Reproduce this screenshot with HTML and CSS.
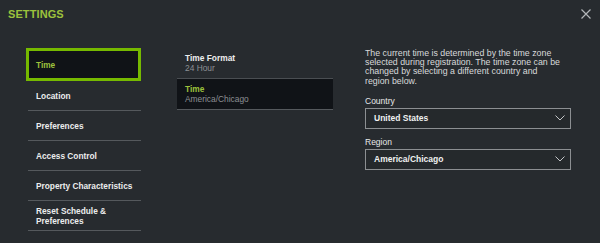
FILE: index.html
```html
<!DOCTYPE html>
<html lang="en">
<head>
    <meta charset="UTF-8">
    <meta name="viewport" content="width=device-width, initial-scale=1.0">
    <title>SETTINGS</title>
    <link rel="stylesheet" href="styles.css">
</head>
<body>
    <div class="settings">
        <div class="settings_header">
            <h1 class="settings_title">SETTINGS</h1>
            <button class="settings_close" aria-label="Close">
                <svg width="10" height="10" viewBox="0 0 10 10"><path d="M0.5 0.5 L9.5 9.5 M9.5 0.5 L0.5 9.5" stroke="#b3b6b9" stroke-width="1.2" fill="none"/></svg>
            </button>
        </div>

        <div class="settings_body">
            <!-- left menu -->
            <ul class="settings_nav">
                <li class="nav_item nav_item--active">Time</li>
                <li class="nav_item">Location</li>
                <li class="nav_item">Preferences</li>
                <li class="nav_item">Access Control</li>
                <li class="nav_item">Property Characteristics</li>
                <li class="nav_item">Reset Schedule &amp;<br>Preferences</li>
            </ul>

            <!-- middle list -->
            <ul class="settings_list">
                <li class="list_item">
                    <span class="list_name">Time Format</span>
                    <span class="list_value">24 Hour</span>
                </li>
                <li class="list_item list_item--active">
                    <span class="list_name">Time</span>
                    <span class="list_value">America/Chicago</span>
                </li>
            </ul>

            <!-- detail panel -->
            <div class="settings_detail">
                <p class="detail_text">The current time is determined by the time zone selected during registration. The time zone can be changed by selecting a different country and region below.</p>

                <label class="detail_label">Country</label>
                <div class="detail_select">
                    <span>United States</span>
                    <svg width="10" height="6" viewBox="0 0 10 6"><path d="M0.5 0.5 L5 5 L9.5 0.5" stroke="#c4c6c8" stroke-width="1" fill="none"/></svg>
                </div>

                <label class="detail_label">Region</label>
                <div class="detail_select">
                    <span>America/Chicago</span>
                    <svg width="10" height="6" viewBox="0 0 10 6"><path d="M0.5 0.5 L5 5 L9.5 0.5" stroke="#c4c6c8" stroke-width="1" fill="none"/></svg>
                </div>
            </div>
        </div>
    </div>
</body>
</html>
```

FILE: styles.css
```css
*{
    box-sizing: border-box;
    margin: 0;
    padding: 0;
}

body{
    background-color: #272b2f;
    font-family: "Liberation Sans", Arial, sans-serif;
    color: #e8e9ea;
}

.settings{
    width: 600px;
    height: 243px;
    overflow: hidden;
}

.settings_header{
    display: flex;
    justify-content: space-between;
    align-items: flex-start;
    padding: 8px 9px 0 8px;
    height: 48px;
}

.settings_title{
    font-size: 11px;
    line-height: 12px;
    font-weight: bold;
    color: #9cc23c;
    letter-spacing: 0.1px;
}

.settings_close{
    border: none;
    background: none;
    width: 10px;
    height: 10px;
    margin-top: 1px;
    display: flex;
    cursor: pointer;
}

.settings_body{
    display: flex;
    align-items: flex-start;
}

/* left menu */
.settings_nav{
    list-style: none;
    width: 113px;
    margin-left: 28px;
}

.nav_item{
    height: 30px;
    display: flex;
    align-items: center;
    padding: 0 3px 0 8px;
    font-size: 8.3px;
    line-height: 10px;
    font-weight: bold;
    color: #eceded;
    border-bottom: 1px solid #55595d;
}

.nav_item--active{
    height: 33px;
    margin-left: -2px;
    padding-left: 7px;
    background-color: #101317;
    border: 3px solid #76b900;
    color: #9cc23c;
}

/* middle list */
.settings_list{
    list-style: none;
    width: 156px;
    margin-left: 36px;
}

.list_item{
    height: 31px;
    display: flex;
    flex-direction: column;
    justify-content: center;
    padding: 0 8px;
    border-bottom: 1px solid #55595d;
}

.list_item:first-child{
    border-bottom-color: #4a4e52;
}

.list_item--active{
    background-color: #101317;
}

.list_name{
    font-size: 8.4px;
    line-height: 10px;
    font-weight: bold;
    color: #eceded;
}

.list_item--active .list_name{
    color: #9cc23c;
}

.list_value{
    font-size: 8.4px;
    line-height: 10px;
    color: #8d9094;
}

/* detail panel */
.settings_detail{
    width: 206px;
    margin-left: 32px;
    padding-top: 1px;
}

.detail_text{
    max-width: 197.5px;
    font-size: 8.8px;
    line-height: 9.2px;
    color: #d9dadb;
}

.detail_label{
    display: block;
    margin-top: 10px;
    font-size: 8.5px;
    line-height: 10px;
    color: #e8e9ea;
}

.detail_select{
    display: flex;
    justify-content: space-between;
    align-items: center;
    height: 21px;
    margin-top: 2px;
    padding: 0 5px 0 8px;
    border: 1px solid #8c8f92;
    background-color: #25292c;
    font-size: 8.5px;
    font-weight: bold;
    color: #f0f1f1;
}

.detail_select + .detail_label{
    margin-top: 8px;
}
```
